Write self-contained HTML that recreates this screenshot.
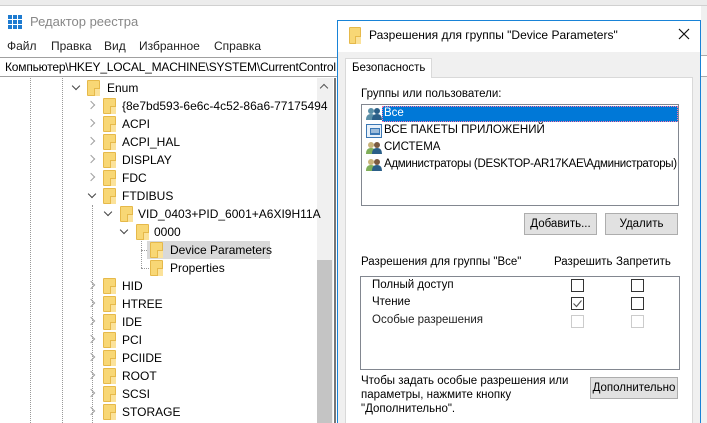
<!DOCTYPE html>
<html><head><meta charset="utf-8"><style>
*{margin:0;padding:0;box-sizing:border-box}
html,body{width:707px;height:423px;overflow:hidden}
body{background:#fff;font-family:"Liberation Sans",sans-serif;font-size:12px;color:#000;position:relative}
.a{position:absolute;white-space:nowrap}
.dl .a,.dl{font-size:11.5px}
.f{position:absolute;width:13px;height:16px;background:#f8d775;border:1px solid #e6b94a;border-radius:1px}
.f:after{content:"";position:absolute;right:-1px;bottom:-1px;width:5px;height:7px;border-left:1px solid #e6b94a;border-top:1px solid #e6b94a;background:#fbe29a}
.chev{position:absolute;width:6px;height:6px;border-right:1.5px solid #a0a0a0;border-bottom:1.5px solid #a0a0a0;transform:rotate(-45deg)}
.chd{position:absolute;width:6px;height:6px;border-right:1.5px solid #444;border-bottom:1.5px solid #444;transform:rotate(45deg)}
.t{position:absolute;font-size:12px;white-space:nowrap}
.cb{position:absolute;width:13px;height:13px;border:1px solid #333;background:#fff}
.cb.d{border-color:#ccc}
.btn{position:absolute;height:22px;background:#e1e1e1;border:1px solid #adadad;text-align:center;line-height:20px;font-size:11.5px}
</style></head><body>
<div class="a" style="left:0;top:0;width:707px;height:6px;background:#ececec;border-bottom:1px solid #d0d0d0"></div>
<div class="a" style="left:8px;top:15px;width:14px;height:14px;background:
linear-gradient(#fff,#fff) 4px 0/1px 14px no-repeat,linear-gradient(#fff,#fff) 9px 0/1px 14px no-repeat,linear-gradient(#fff,#fff) 0 4px/14px 1px no-repeat,linear-gradient(#fff,#fff) 0 9px/14px 1px no-repeat,#1e7bd0"></div>
<div class="a" style="left:30px;top:14px;font-size:13px;color:#888">Редактор реестра</div>
<div class="a" style="left:7px;top:39px;color:#222">Файл</div>
<div class="a" style="left:51px;top:39px;color:#222">Правка</div>
<div class="a" style="left:104px;top:39px;color:#222">Вид</div>
<div class="a" style="left:139px;top:39px;color:#222">Избранное</div>
<div class="a" style="left:214px;top:39px;color:#222">Справка</div>
<div class="a" style="left:0;top:57px;width:340px;height:20px;border:1px solid #a0a0a0;border-left:none;background:#fff"></div>
<div class="a" style="left:5px;top:60px;font-size:12px;letter-spacing:-0.2px">Компьютер\HKEY_LOCAL_MACHINE\SYSTEM\CurrentControl</div>
<div class="a" style="left:30px;top:78px;height:345px;border-left:1px dotted #999"></div>
<div class="a" style="left:62px;top:78px;height:345px;border-left:1px dotted #999"></div>
<div class="a" style="left:92px;top:205px;height:218px;border-left:1px dotted #999"></div>
<div class="a" style="left:317px;top:78px;width:16px;height:345px;background:#f0f0f0"></div>
<div class="a" style="left:317px;top:260px;width:15px;height:163px;background:#c4c4c4"></div>
<div class="a" style="left:321px;top:85px;width:6px;height:6px;border-left:1.5px solid #555;border-top:1.5px solid #555;transform:rotate(45deg)"></div>
<div class="a" style="left:334px;top:78px;width:2px;height:345px;background:#777"></div>
<div class="chd" style="left:73px;top:83px"></div><div class="f" style="left:87px;top:80px"></div><div class="t" style="left:107px;top:81px">Enum</div>
<div class="chev" style="left:88px;top:102px"></div><div class="f" style="left:103px;top:98px"></div><div class="t" style="left:122px;top:99px">{8e7bd593-6e6c-4c52-86a6-77175494</div>
<div class="chev" style="left:88px;top:120px"></div><div class="f" style="left:103px;top:116px"></div><div class="t" style="left:122px;top:117px">ACPI</div>
<div class="chev" style="left:88px;top:138px"></div><div class="f" style="left:103px;top:134px"></div><div class="t" style="left:122px;top:135px">ACPI_HAL</div>
<div class="chev" style="left:88px;top:156px"></div><div class="f" style="left:103px;top:152px"></div><div class="t" style="left:122px;top:153px">DISPLAY</div>
<div class="chev" style="left:88px;top:174px"></div><div class="f" style="left:103px;top:170px"></div><div class="t" style="left:122px;top:171px">FDC</div>
<div class="chd" style="left:89px;top:191px"></div><div class="f" style="left:103px;top:188px"></div><div class="t" style="left:122px;top:189px">FTDIBUS</div>
<div class="chd" style="left:105px;top:209px"></div><div class="f" style="left:120px;top:206px"></div><div class="t" style="left:138px;top:207px">VID_0403+PID_6001+A6XI9H11A</div>
<div class="chd" style="left:121px;top:227px"></div><div class="f" style="left:136px;top:224px"></div><div class="t" style="left:154px;top:225px">0000</div>
<div class="a" style="left:141px;top:241px;height:27px;border-left:1px dotted #999"></div>
<div class="a" style="left:141px;top:250px;width:8px;border-top:1px dotted #999"></div>
<div class="a" style="left:141px;top:268px;width:8px;border-top:1px dotted #999"></div>
<div class="a" style="left:147px;top:241px;width:123px;height:18px;background:#d9d9d9"></div>
<div class="f" style="left:150px;top:242px"></div><div class="t" style="left:170px;top:243px">Device Parameters</div>
<div class="f" style="left:150px;top:260px"></div><div class="t" style="left:170px;top:261px">Properties</div>
<div class="chev" style="left:88px;top:282px"></div><div class="f" style="left:103px;top:278px"></div><div class="t" style="left:122px;top:279px">HID</div>
<div class="chev" style="left:88px;top:300px"></div><div class="f" style="left:103px;top:296px"></div><div class="t" style="left:122px;top:297px">HTREE</div>
<div class="chev" style="left:88px;top:318px"></div><div class="f" style="left:103px;top:314px"></div><div class="t" style="left:122px;top:315px">IDE</div>
<div class="chev" style="left:88px;top:336px"></div><div class="f" style="left:103px;top:332px"></div><div class="t" style="left:122px;top:333px">PCI</div>
<div class="chev" style="left:88px;top:354px"></div><div class="f" style="left:103px;top:350px"></div><div class="t" style="left:122px;top:351px">PCIIDE</div>
<div class="chev" style="left:88px;top:372px"></div><div class="f" style="left:103px;top:368px"></div><div class="t" style="left:122px;top:369px">ROOT</div>
<div class="chev" style="left:88px;top:390px"></div><div class="f" style="left:103px;top:386px"></div><div class="t" style="left:122px;top:387px">SCSI</div>
<div class="chev" style="left:88px;top:408px"></div><div class="f" style="left:103px;top:404px"></div><div class="t" style="left:122px;top:405px">STORAGE</div>
<div class="a" style="left:701px;top:6px;width:6px;height:417px;background:#f0f0f0"></div>
<div class="a" style="left:701px;top:55px;width:6px;height:22px;background:#fff;border-top:1px solid #aaa;border-bottom:1px solid #aaa"></div>
<div class="dl">
<div class="a" style="left:337px;top:20px;width:364px;height:403px;background:#f0f0f0;border:1px solid #1883d7;border-bottom:none"></div>
<div class="a" style="left:338px;top:21px;width:362px;height:31px;background:#fff"></div>
<div class="f" style="left:349px;top:27px;width:12px;height:17px"></div>
<div class="a" style="left:369px;top:28px;font-size:12px">Разрешения для группы "Device Parameters"</div>
<svg class="a" style="left:678px;top:28px" width="12" height="12"><path d="M1 1L11 11M11 1L1 11" stroke="#111" stroke-width="1.2"/></svg>
<div class="a" style="left:345px;top:77px;width:348px;height:346px;background:#fff;border:1px solid #d9d9d9;border-bottom:none"></div>
<div class="a" style="left:345px;top:58px;width:87px;height:20px;background:#fff;border:1px solid #d9d9d9;border-bottom:none"></div>
<div class="a" style="left:352px;top:62px">Безопасность</div>
<div class="a" style="left:361px;top:88px">Группы или пользователи:</div>
<div class="a" style="left:361px;top:104px;width:318px;height:102px;border:1px solid #828790;background:#fff"></div>
<div class="a" style="left:382px;top:106px;width:296px;height:16px;background:#0078d7;border:1px dotted #f7a"></div>
<svg class="a" style="left:366px;top:107px" width="16" height="14"><circle cx="5" cy="4" r="3" fill="#5a8fa8"/><path d="M0 13q0-6 5-6t5 6z" fill="#5a8fa8"/><circle cx="11" cy="4" r="3" fill="#2a5f88"/><path d="M6 13q0-6 5-6t5 6z" fill="#2a5f88"/></svg>
<div class="a" style="left:384px;top:107px;color:#fff">Все</div>
<svg class="a" style="left:366px;top:124px" width="16" height="14"><rect x="0.5" y="0.5" width="15" height="13" fill="#e8f1fa" stroke="#3b78b5"/><rect x="4" y="4" width="10" height="7" fill="#3b78b5"/><path d="M5 6h8M5 8h8" stroke="#fff"/></svg>
<div class="a" style="left:384px;top:124px">ВСЕ ПАКЕТЫ ПРИЛОЖЕНИЙ</div>
<svg class="a" style="left:366px;top:141px" width="16" height="14"><circle cx="5" cy="4" r="3" fill="#c9b37a"/><path d="M0 13q0-6 5-6t5 6z" fill="#7fae5a"/><circle cx="11" cy="4" r="3" fill="#7a5a40"/><path d="M6 13q0-6 5-6t5 6z" fill="#2a5f88"/></svg>
<div class="a" style="left:384px;top:141px">СИСТЕМА</div>
<svg class="a" style="left:366px;top:158px" width="16" height="14"><circle cx="5" cy="4" r="3" fill="#c9b37a"/><path d="M0 13q0-6 5-6t5 6z" fill="#7fae5a"/><circle cx="11" cy="4" r="3" fill="#7a5a40"/><path d="M6 13q0-6 5-6t5 6z" fill="#2a5f88"/></svg>
<div class="a" style="left:384px;top:158px;letter-spacing:-0.3px">Администраторы (DESKTOP-AR17KAE\Администраторы)</div>
<div class="btn" style="left:524px;top:213px;width:73px">Добавить...</div>
<div class="btn" style="left:605px;top:213px;width:73px">Удалить</div>
<div class="a" style="left:361px;top:256px">Разрешения для группы "Все"</div>
<div class="a" style="left:554px;top:256px">Разрешить</div>
<div class="a" style="left:616px;top:256px">Запретить</div>
<div class="a" style="left:360px;top:276px;width:320px;height:94px;border:1px solid #828790"></div>
<div class="a" style="left:372px;top:279px">Полный доступ</div>
<div class="a" style="left:372px;top:296px">Чтение</div>
<div class="a" style="left:372px;top:314px;color:#222">Особые разрешения</div>
<div class="cb" style="left:571px;top:279px"></div><div class="cb" style="left:631px;top:279px"></div>
<div class="cb" style="left:571px;top:297px"></div><div class="cb" style="left:631px;top:297px"></div>
<svg class="a" style="left:571px;top:297px" width="13" height="13"><path d="M2.5 6.5l3 3 5-6" stroke="#555" fill="none" stroke-width="1.1"/></svg>
<div class="cb d" style="left:571px;top:315px"></div><div class="cb d" style="left:631px;top:315px"></div>
<div class="a" style="left:361px;top:375px">Чтобы задать особые разрешения или</div>
<div class="a" style="left:361px;top:389px">параметры, нажмите кнопку</div>
<div class="a" style="left:361px;top:403px">"Дополнительно".</div>
<div class="btn" style="left:590px;top:377px;width:88px">Дополнительно</div>
</div>
</body></html>
